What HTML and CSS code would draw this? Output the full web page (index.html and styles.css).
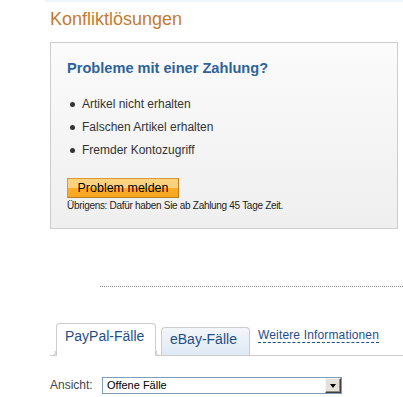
FILE: index.html
```
<!DOCTYPE html>
<html lang="de">
<head>
<meta charset="utf-8">
<title>Konfliktlösungen</title>
<link rel="stylesheet" href="styles.css">
</head>
<body>
<div class="page">
  <div class="topstrip"></div>
  <h1 class="title">Konfliktlösungen</h1>
  <div class="box">
    <h2 class="box-title">Probleme mit einer Zahlung?</h2>
    <ul class="issues">
      <li>Artikel nicht erhalten</li>
      <li>Falschen Artikel erhalten</li>
      <li>Fremder Kontozugriff</li>
    </ul>
    <button class="btn" type="button">Problem melden</button>
    <p class="note">Übrigens: Dafür haben Sie ab Zahlung 45 Tage Zeit.</p>
  </div>
  <div class="divider"></div>
  <div class="tabs">
    <div class="tab tab-active">PayPal-Fälle</div>
    <div class="tab tab-ebay">eBay-Fälle</div>
    <a class="more" href="#">Weitere Informationen</a>
  </div>
  <div class="filter">
    <span class="filter-label">Ansicht:</span>
    <div class="select">
      <span class="select-text">Offene Fälle</span>
      <span class="select-btn"><span class="tri"></span></span>
    </div>
  </div>
</div>
</body>
</html>
```
FILE: styles.css
```
html, body {
  margin: 0;
  padding: 0;
  background: #fff;
}
body {
  font-family: "Liberation Sans", Arial, sans-serif;
  color: #333;
}
.page {
  width: 403px;
  overflow: hidden;
}
.topstrip {
  height: 2px;
  margin-left: 45px;
  background: #f1f4f8;
}
.title {
  margin: 6px 0 0 50px;
  font-size: 18px;
  line-height: 22px;
  font-weight: normal;
  color: #c57a30;
}
.box {
  margin: 12px 0 0 50px;
  width: 348px;
  border: 1px solid #cdcdcd;
  padding: 16px 16px 16px 16px;
  box-sizing: border-box;
  background: linear-gradient(#fbfbfc, #efefef);
}
.box-title {
  margin: 0;
  font-size: 14.6px;
  line-height: 18px;
  font-weight: bold;
  color: #2f6398;
}
.issues {
  list-style: none;
  margin: 16px 0 0 0;
  padding: 0;
}
.issues li {
  position: relative;
  padding-left: 15px;
  font-size: 12px;
  line-height: 23px;
  color: #333;
}
.issues li::before {
  content: "";
  position: absolute;
  left: 3px;
  top: 9px;
  width: 5px;
  height: 5px;
  border-radius: 50%;
  background: #333;
}
.btn {
  display: block;
  margin: 16px 0 0 0;
  width: 112px;
  height: 20px;
  padding: 0;
  border: 1px solid #d99a35;
  border-right-color: #b97e22;
  border-bottom-color: #b97e22;
  background: linear-gradient(#fdd27f 0, #fdd27f 50%, #fdaa27 50%, #fca722 100%);
  font-family: "Liberation Sans", Arial, sans-serif;
  font-size: 12.5px;
  line-height: 18px;
  color: #000;
  text-align: center;
}
.note {
  margin: 2px 0 0 0;
  font-size: 10px;
  line-height: 12px;
  letter-spacing: -0.3px;
  color: #222;
}
.divider {
  margin: 57px 0 0 100px;
  border-top: 1px dotted #8a8a8a;
}
.tabs {
  display: flex;
  align-items: flex-end;
  margin: 36px 0 0 50px;
  height: 32px;
  border-bottom: 1px solid #cccccc;
}
.tab {
  box-sizing: border-box;
  border: 1px solid #cccccc;
  border-bottom: none;
  border-radius: 4px 4px 0 0;
  padding-left: 8px;
  font-size: 14px;
  line-height: 18px;
  color: #1f4e87;
}
.tab-active {
  position: relative;
  margin-left: 6px;
  margin-bottom: -1px;
  width: 100px;
  height: 33px;
  padding-top: 3px;
  background: #fff;
}
.tab-active::before,
.tab-active::after {
  content: "";
  position: absolute;
  bottom: 0;
  width: 4px;
  height: 4px;
  border-bottom: 1px solid #cccccc;
}
.tab-active::before {
  left: -6px;
  border-right: 1px solid #cccccc;
  border-bottom-right-radius: 4px;
}
.tab-active::after {
  right: -6px;
  border-left: 1px solid #cccccc;
  border-bottom-left-radius: 4px;
}
.tab-ebay {
  margin-left: 5px;
  width: 89px;
  height: 28px;
  padding-top: 2px;
  background: linear-gradient(#f3f6fa, #dfe9f4);
}
.more {
  margin: 0 0 12px 8px;
  font-size: 12px;
  line-height: 14px;
  letter-spacing: 0.15px;
  color: #1f4e87;
  text-decoration: none;
  border-bottom: 1px dashed #1f4e87;
}
.filter {
  display: flex;
  align-items: center;
  margin: 21px 0 0 50px;
}
.filter-label {
  width: 52px;
  font-size: 12px;
  line-height: 17px;
  color: #444;
}
.select {
  box-sizing: border-box;
  display: flex;
  align-items: center;
  justify-content: space-between;
  width: 240px;
  height: 17px;
  border: 1px solid #7f9db9;
  background: #fff;
}
.select-text {
  padding-left: 4px;
  font-size: 11px;
  line-height: 15px;
  color: #000;
}
.select-btn {
  box-sizing: border-box;
  display: flex;
  align-items: center;
  justify-content: center;
  width: 16px;
  height: 15px;
  background: #e4e1da;
  border: 1px solid;
  border-color: #f4f3ef #404040 #404040 #f4f3ef;
  box-shadow: inset -1px -1px 0 #8c8a85;
}
.tri {
  width: 0;
  height: 0;
  border-left: 3.5px solid transparent;
  border-right: 3.5px solid transparent;
  border-top: 4px solid #000;
  margin-top: 1px;
}
```
